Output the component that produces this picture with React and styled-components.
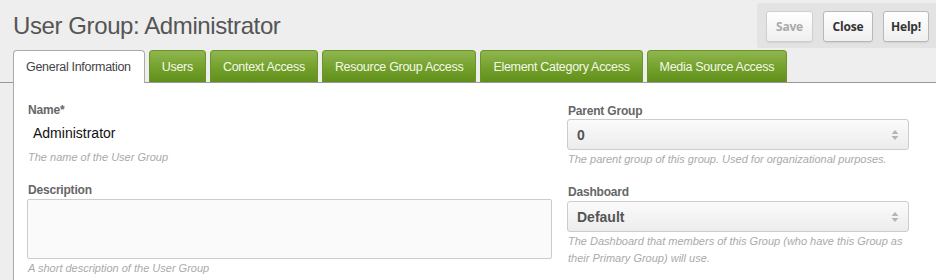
import React from 'react';
import styled, { createGlobalStyle } from 'styled-components';

const GlobalStyle = createGlobalStyle`
  * {
    margin: 0;
    padding: 0;
    box-sizing: border-box;
  }

  html, body {
    background: #eeeeee;
    font-family: 'Liberation Sans', Arial, sans-serif;
    overflow: hidden;
  }
`;

// Cabecalho
const Header = styled.div`
  display: flex;
  justify-content: space-between;
  align-items: flex-start;
  height: 50px;
`;

const Title = styled.h1`
  font-size: 24px;
  font-weight: normal;
  line-height: 28px;
  letter-spacing: -0.4px;
  color: #555555;
  padding: 12px 0 0 13px;
`;

const ButtonPanel = styled.div`
  display: flex;
  gap: 10px;
  margin-top: 3px;
  height: 45px;
  padding: 8px 7px 0 9px;
  background: #e3e3e3;
  border-radius: 3px 0 0 3px;
`;

const ActionButton = styled.button`
  width: ${({ $w }) => $w}px;
  height: 31px;
  padding: 0;
  border: 1px solid ${({ disabled }) => (disabled ? '#cfcfcf' : '#b9b9b9')};
  border-radius: 3px;
  background: linear-gradient(#ffffff, #efefef);
  box-shadow: 0 1px 1px rgba(0, 0, 0, 0.08);
  font-family: 'Open Sans', sans-serif;
  font-size: 12px;
  font-weight: 700;
  letter-spacing: -0.2px;
  color: ${({ disabled }) => (disabled ? '#aaaaaa' : '#333333')};
  cursor: pointer;
`;

// Abas
const TabBar = styled.div`
  display: flex;
  align-items: flex-end;
  gap: 4px;
  height: 33px;
  padding-left: 13px;
  border-bottom: 1px solid #999999;
`;

const Tab = styled.div`
  display: flex;
  align-items: center;
  height: ${({ $active }) => ($active ? 33 : 32)}px;
  margin-bottom: ${({ $active }) => ($active ? -1 : 0)}px;
  padding: 0 ${({ $active }) => ($active ? 13 : 12)}px 0 12px;
  border: 1px solid ${({ $active }) => ($active ? '#aaaaaa' : '#6a9628')};
  border-bottom: none;
  border-radius: 4px 4px 0 0;
  background: ${({ $active }) =>
    $active ? '#ffffff' : 'linear-gradient(#8fb650, #76a22e 50%, #5f8f1a)'};
  color: ${({ $active }) => ($active ? '#444444' : '#f4f9e8')};
  font-size: 12.5px;
  letter-spacing: -0.3px;
  white-space: nowrap;
`;

// Painel
const Panel = styled.div`
  margin-left: 13px;
  border-left: 1px solid #aaaaaa;
  background: #ffffff;
  height: 200px;
  padding: 19px 0 0 13px;
  display: grid;
  grid-template-columns: 525px 342px;
  column-gap: 15px;
  align-items: start;
`;

const Column = styled.div`
  display: flex;
  flex-direction: column;
  padding-top: ${({ $offset }) => $offset || 0}px;
`;

const Label = styled.label`
  display: block;
  font-size: 12px;
  font-weight: 700;
  line-height: 16px;
  letter-spacing: -0.2px;
  color: #666666;
  padding-left: 1px;
  margin-top: ${({ $gap }) => $gap || 0}px;
`;

const Value = styled.div`
  height: 26px;
  line-height: 27px;
  margin-top: 2px;
  padding-left: 6px;
  font-size: 14px;
  color: #111111;
`;

const Help = styled.div`
  font-size: 11px;
  font-style: italic;
  line-height: ${({ $lh }) => $lh || 16}px;
  color: #aaaaaa;
  padding-left: 1px;
  margin-top: ${({ $gap }) => $gap || 0}px;
`;

const TextArea = styled.div`
  height: 60px;
  margin-top: 1px;
  background: #fafafa;
  border: 1px solid #cccccc;
  border-radius: 2px;
`;

const Select = styled.div`
  display: flex;
  align-items: center;
  justify-content: space-between;
  height: 31px;
  margin-top: ${({ $gap }) => $gap || 0}px;
  padding: 0 9px;
  border: 1px solid #cccccc;
  border-radius: 3px;
  background: linear-gradient(#fbfbfb, #ececec);
  font-size: 14px;
  font-weight: 700;
  color: #555555;
`;

const Arrows = () => (
  <svg width="8" height="10" viewBox="0 0 8 10">
    <path d="M4 0 L7.5 4 H0.5 Z" fill="#b5b5b5" />
    <path d="M4 10 L7.5 6 H0.5 Z" fill="#b5b5b5" />
  </svg>
);

const tabs = [
  'General Information',
  'Users',
  'Context Access',
  'Resource Group Access',
  'Element Category Access',
  'Media Source Access',
];

export default function App() {
  return (
    <>
      <GlobalStyle />
      <Header>
        <Title>User Group: Administrator</Title>
        <ButtonPanel>
          <ActionButton disabled $w={47}>Save</ActionButton>
          <ActionButton $w={50}>Close</ActionButton>
          <ActionButton $w={46}>Help!</ActionButton>
        </ButtonPanel>
      </Header>
      <TabBar>
        {tabs.map((t, i) => (
          <Tab key={t} $active={i === 0}>
            {t}
          </Tab>
        ))}
      </TabBar>
      <Panel>
        <Column>
          <Label>Name*</Label>
          <Value>Administrator</Value>
          <Help $gap={3}>The name of the User Group</Help>
          <Label $gap={17}>Description</Label>
          <TextArea />
          <Help $gap={1}>A short description of the User Group</Help>
        </Column>
        <Column $offset={1}>
          <Label>Parent Group</Label>
          <Select>
            <span>0</span>
            <Arrows />
          </Select>
          <Help $gap={1}>The parent group of this group. Used for organizational purposes.</Help>
          <Label $gap={17}>Dashboard</Label>
          <Select $gap={1}>
            <span>Default</span>
            <Arrows />
          </Select>
          <Help $gap={1} $lh={17}>
            The Dashboard that members of this Group (who have this Group as their Primary Group)
            will use.
          </Help>
        </Column>
      </Panel>
    </>
  );
}
